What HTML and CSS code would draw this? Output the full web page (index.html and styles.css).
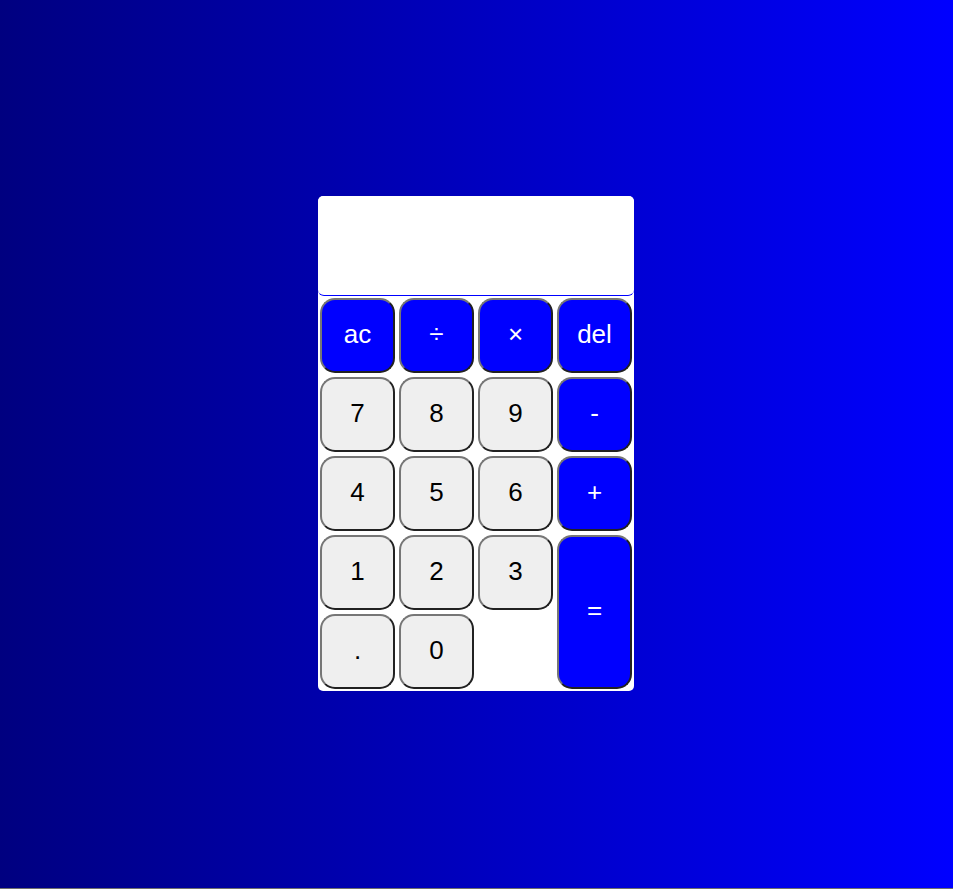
FILE: index.html
```html
<!DOCTYPE html>
<html lang="en">
<head>
<meta charset="utf-8">
<title>Calculator</title>
<link rel="stylesheet" href="styles.css">
</head>
<body>
<div class="calculator">
  <div class="display"></div>
  <div class="keys">
    <button class="key op">ac</button>
    <button class="key op">÷</button>
    <button class="key op">×</button>
    <button class="key op">del</button>
    <button class="key">7</button>
    <button class="key">8</button>
    <button class="key">9</button>
    <button class="key op">-</button>
    <button class="key">4</button>
    <button class="key">5</button>
    <button class="key">6</button>
    <button class="key op">+</button>
    <button class="key">1</button>
    <button class="key">2</button>
    <button class="key">3</button>
    <button class="key op equals">=</button>
    <button class="key">.</button>
    <button class="key">0</button>
  </div>
</div>
</body>
</html>
```
FILE: styles.css
```css
html {
  background: #6e6e6e;
}
body {
  margin: 0;
  height: calc(100vh - 1px);
  background: linear-gradient(to right, #000080, #0000ff);
  display: flex;
  align-items: center;
  justify-content: center;
  font-family: "Liberation Sans", Arial, sans-serif;
}
.calculator {
  width: 316px;
  margin: 0 1px 1px 0;
  background: #ffffff;
  border-radius: 5px;
}
.display {
  height: 99px;
  background: #ffffff;
  border-radius: 6px;
  border-bottom: 1px solid #0000ff;
}
.keys {
  display: grid;
  grid-template-columns: repeat(4, 75px);
  grid-auto-rows: 75px;
  gap: 4px;
  padding: 2px;
}
.key {
  font-family: "Liberation Sans", Arial, sans-serif;
  font-size: 26px;
  background: #efefef;
  color: #000000;
  border: 2px outset #767676;
  border-radius: 15px;
  padding: 0 0 3px;
  margin: 0;
}
.key.op {
  background: #0000ff;
  color: #ffffff;
}
.key.equals {
  grid-column: 4;
  grid-row: 4 / span 2;
}
```
